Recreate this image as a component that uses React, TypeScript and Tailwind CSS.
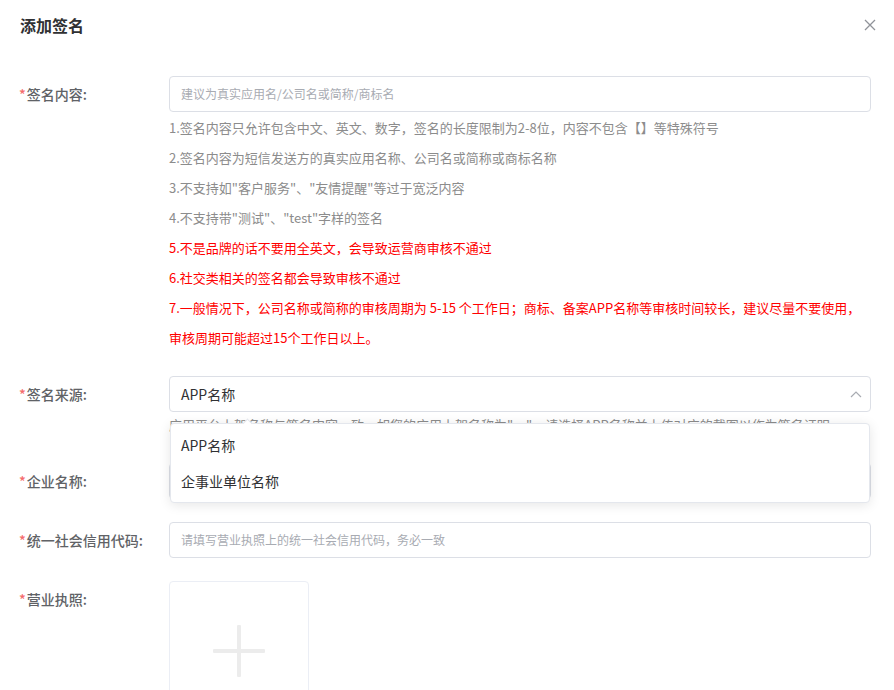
import React from 'react';

const FONT = { fontFamily: '"Noto Sans CJK SC", "Noto Sans", sans-serif' };

// notes shown under the signature input
const GRAY_NOTES = [
  '1.签名内容只允许包含中文、英文、数字，签名的长度限制为2-8位，内容不包含【】等特殊符号',
  '2.签名内容为短信发送方的真实应用名称、公司名或简称或商标名称',
  '3.不支持如"客户服务"、"友情提醒"等过于宽泛内容',
  '4.不支持带"测试"、"test"字样的签名',
];

const RED_NOTES = [
  '5.不是品牌的话不要用全英文，会导致运营商审核不通过',
  '6.社交类相关的签名都会导致审核不通过',
  '7.一般情况下，公司名称或简称的审核周期为 5-15 个工作日；商标、备案APP名称等审核时间较长，建议尽量不要使用，',
  '审核周期可能超过15个工作日以上。',
];

const Label: React.FC<{ text: string }> = ({ text }) => (
  <div className="w-[150px] shrink-0 h-[36px] flex items-center text-[14px] font-medium text-[#606266]">
    <span className="text-[#f56c6c] mr-[1px]">*</span>
    {text}:
  </div>
);

const TextInput: React.FC<{ placeholder?: string }> = ({ placeholder }) => (
  <div className="h-[36px] w-full border border-[#dcdfe6] rounded-[4px] flex items-center px-[11px] text-[12px] text-[#a8abb2]">
    {placeholder}
  </div>
);

const AddSignatureDialog: React.FC = () => {
  return (
    <div className="w-full min-h-screen bg-white" style={FONT}>
      <div className="h-[50px] flex items-center justify-between pl-[20px] pr-[18px]">
        <h2 className="text-[16px] font-bold text-[#303133]">添加签名</h2>
        <svg width="12" height="12" viewBox="0 0 12 12" className="text-[#909399]">
          <path d="M1 1L11 11M11 1L1 11" stroke="currentColor" strokeWidth="1.3" fill="none" />
        </svg>
      </div>

      <div className="pt-[26px] pl-[19px] pr-[23px]">
        {/* 签名内容 */}
        <div className="flex mb-[23px]">
          <Label text="签名内容" />
          <div className="flex-1">
            <TextInput placeholder="建议为真实应用名/公司名或简称/商标名" />
            <div className="text-[13px] leading-[30px] pt-[1px]">
              {GRAY_NOTES.map((n) => (
                <div key={n} className="text-[#8c8c8c] whitespace-nowrap">{n}</div>
              ))}
              {RED_NOTES.map((n) => (
                <div key={n} className="text-[#ff0000] whitespace-nowrap">{n}</div>
              ))}
            </div>
          </div>
        </div>

        {/* 签名来源 */}
        <div className="flex mb-[23px]">
          <Label text="签名来源" />
          <div className="flex-1 relative">
            <div className="h-[36px] w-full border border-[#dcdfe6] rounded-[4px] flex items-center justify-between pl-[11px] pr-[8px] text-[14px] text-[#303133]">
              <span>APP名称</span>
              <svg width="12" height="8" viewBox="0 0 12 8" className="text-[#a8abb2]">
                <path d="M1 7L6 2L11 7" stroke="currentColor" strokeWidth="1.2" fill="none" />
              </svg>
            </div>
            <div className="h-[28px] pt-[3px] text-[13px] text-[#8c8c8c] whitespace-nowrap overflow-hidden">
              应用平台上架名称与签名内容一致，如您的应用上架名称为"xx"，请选择APP名称并上传对应的截图以作为签名证明
            </div>

            {/* dropdown */}
            <div className="absolute left-[1px] right-[1px] top-[47px] z-10 bg-white border border-[#e4e7ed] rounded-[4px] shadow-[0_2px_12px_rgba(0,0,0,0.1)] py-[3px]">
              <div className="absolute -top-[4px] left-[73px] w-[7px] h-[7px] bg-white border-l border-t border-[#e4e7ed] rotate-45" />
              <div className="h-[36px] flex items-center px-[10px] text-[14px] text-[#303133]">APP名称</div>
              <div className="h-[36px] flex items-center px-[10px] text-[14px] text-[#303133]">企事业单位名称</div>
            </div>
          </div>
        </div>

        {/* 企业名称 */}
        <div className="flex mb-[23px]">
          <Label text="企业名称" />
          <div className="flex-1">
            <TextInput />
          </div>
        </div>

        {/* 统一社会信用代码 */}
        <div className="flex mb-[23px]">
          <Label text="统一社会信用代码" />
          <div className="flex-1">
            <TextInput placeholder="请填写营业执照上的统一社会信用代码，务必一致" />
          </div>
        </div>

        {/* 营业执照 */}
        <div className="flex">
          <Label text="营业执照" />
          <div className="w-[140px] h-[140px] border border-[#ebeef5] rounded-[4px] flex items-center justify-center">
            <svg width="52" height="52" viewBox="0 0 52 52" className="text-[#ececec]">
              <rect x="0" y="24" width="52" height="4" rx="1" fill="currentColor" />
              <rect x="24" y="0" width="4" height="52" rx="1" fill="currentColor" />
            </svg>
          </div>
        </div>
      </div>
    </div>
  );
};

export default AddSignatureDialog;
